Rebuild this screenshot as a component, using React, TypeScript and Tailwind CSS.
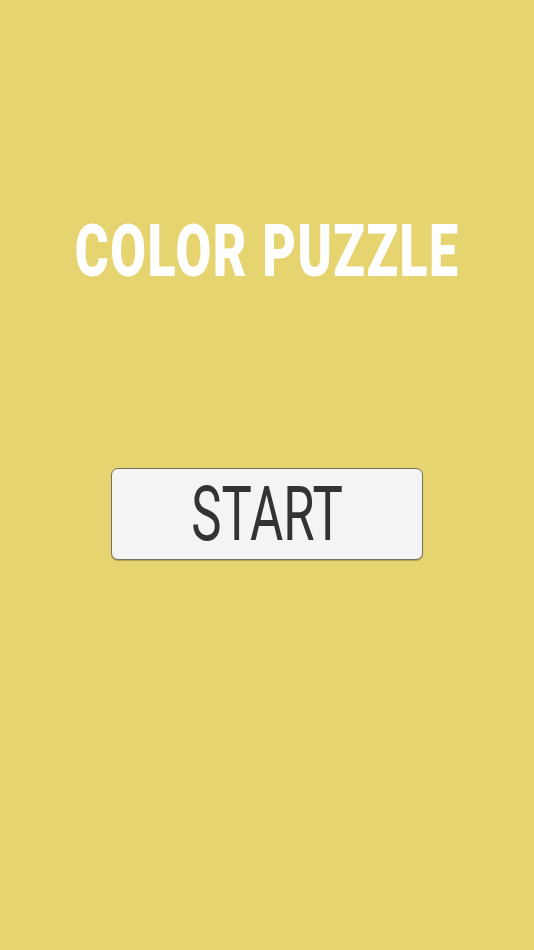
export default function App() {
  return (
    <div className="flex h-[950px] w-full flex-col items-center bg-[#e6d470] font-['Roboto',sans-serif]">
      <h1 className="mt-[212px] inline-block scale-x-[0.72] whitespace-nowrap text-[72px] font-black leading-[80px] tracking-[2px] text-white">
        COLOR PUZZLE
      </h1>
      <button className="mt-[176px] flex h-[92px] w-[312px] items-center justify-center rounded-[7px] border border-[#77715f] bg-[#f4f4f4] text-[#333333] shadow-[0_1px_1px_rgba(0,0,0,0.25)]">
        <span className="inline-block scale-x-[0.67] whitespace-nowrap text-[76px] font-normal leading-none">START</span>
      </button>
    </div>
  );
}
